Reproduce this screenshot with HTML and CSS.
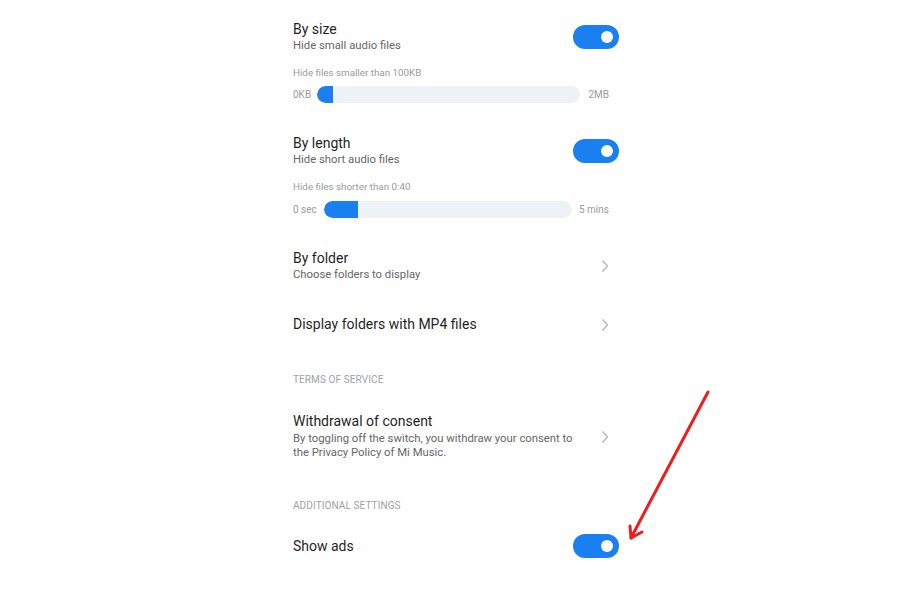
FILE: index.html
```html
<!DOCTYPE html>
<html>
<head>
<meta charset="utf-8">
<link rel="stylesheet" href="styles.css">
</head>
<body>
<div class="page">
  <div class="settings">
    <div class="row row-size">
      <div class="text">
        <div class="title">By size</div>
        <div class="sub">Hide small audio files</div>
      </div>
      <div class="toggle"><span class="knob"></span></div>
    </div>
    <div class="caption cap1">Hide files smaller than 100KB</div>
    <div class="slider-row s1">
      <span class="lbl">0KB</span>
      <div class="track"><div class="fill" style="width:16px"></div></div>
      <span class="lbl">2MB</span>
    </div>

    <div class="row row-len">
      <div class="text">
        <div class="title">By length</div>
        <div class="sub">Hide short audio files</div>
      </div>
      <div class="toggle"><span class="knob"></span></div>
    </div>
    <div class="caption cap2">Hide files shorter than 0:40</div>
    <div class="slider-row s2">
      <span class="lbl">0 sec</span>
      <div class="track"><div class="fill" style="width:34px"></div></div>
      <span class="lbl">5 mins</span>
    </div>

    <div class="row row-folder">
      <div class="text">
        <div class="title">By folder</div>
        <div class="sub">Choose folders to display</div>
      </div>
      <svg class="chev" width="8" height="14" viewBox="0 0 8 14"><path d="M1.5 1.5 L6.5 7 L1.5 12.5" fill="none" stroke="#b8b8b8" stroke-width="1.4"/></svg>
    </div>

    <div class="row row-mp4">
      <div class="text">
        <div class="title">Display folders with MP4 files</div>
      </div>
      <svg class="chev" width="8" height="14" viewBox="0 0 8 14"><path d="M1.5 1.5 L6.5 7 L1.5 12.5" fill="none" stroke="#b8b8b8" stroke-width="1.4"/></svg>
    </div>

    <div class="section sec1">TERMS OF SERVICE</div>

    <div class="row row-consent">
      <div class="text">
        <div class="title">Withdrawal of consent</div>
        <div class="sub desc">By toggling off the switch, you withdraw your consent to<br>the Privacy Policy of Mi Music.</div>
      </div>
      <svg class="chev" width="8" height="14" viewBox="0 0 8 14"><path d="M1.5 1.5 L6.5 7 L1.5 12.5" fill="none" stroke="#b8b8b8" stroke-width="1.4"/></svg>
    </div>

    <div class="section sec2">ADDITIONAL SETTINGS</div>

    <div class="row row-ads">
      <div class="text">
        <div class="title">Show ads</div>
      </div>
      <div class="toggle"><span class="knob"></span></div>
    </div>
  </div>

  <svg class="arrow" width="900" height="600" viewBox="0 0 900 600">
    <g stroke="#ee1c1c" stroke-width="3" stroke-linecap="round" fill="none">
      <line x1="708" y1="392" x2="632" y2="536"/>
      <line x1="631" y1="538" x2="630" y2="526"/>
      <line x1="631" y1="538" x2="642" y2="532"/>
    </g>
  </svg>
</div>
</body>
</html>
```
FILE: styles.css
```css
* { box-sizing: border-box; }
html, body { margin: 0; padding: 0; background: #ffffff; }
body {
  width: 900px;
  height: 600px;
  overflow: hidden;
  font-family: Roboto, "Noto Sans", "Liberation Sans", sans-serif;
  color: #222222;
}
.page { position: relative; width: 900px; height: 600px; }
.settings {
  display: flex;
  flex-direction: column;
  width: 326px;
  margin-left: 293px;
  padding-top: 21px;
}
.row {
  display: flex;
  align-items: center;
  justify-content: space-between;
}
.title {
  font-size: 14px;
  line-height: 17px;
  color: #1f1f1f;
}
.sub {
  font-size: 11.3px;
  line-height: 14px;
  color: #666666;
  margin-top: 1px;
}
.desc { line-height: 14px; margin-top: 2px; }
.caption {
  font-size: 9.8px;
  line-height: 12px;
  color: #9a9a9a;
}
.cap1, .cap2 { margin-top: 14px; }
.slider-row {
  display: flex;
  align-items: center;
  height: 17px;
  margin-right: 10px;
}
.s1 { margin-top: 7px; }
.s2 { margin-top: 8px; }
.lbl {
  font-size: 10px;
  color: #9a9a9a;
}
.track {
  flex: 1;
  height: 17px;
  background: #eef1f5;
  border-radius: 9px;
  overflow: hidden;
}
.s1 .track { margin: 0 8px 0 6px; }
.s2 .track { margin: 0 7px 0 7px; }
.fill {
  height: 100%;
  background: #1a7ff0;
  border-radius: 9px 0 0 9px;
}
.toggle {
  width: 46px;
  height: 24px;
  border-radius: 12px;
  background: #1a7ff0;
  display: flex;
  align-items: center;
  justify-content: flex-end;
  padding-right: 6px;
}
.knob {
  width: 12px;
  height: 12px;
  border-radius: 50%;
  background: #ffffff;
}
.chev { margin-right: 10px; }
.row-len { margin-top: 32px; }
.row-folder { margin-top: 32px; }
.row-mp4 { margin-top: 34px; }
.section {
  font-size: 10px;
  line-height: 12px;
  color: #a0a0a8;
  letter-spacing: 0.1px;
}
.sec1 { margin-top: 41px; }
.row-consent { margin-top: 27px; }
.sec2 { margin-top: 40px; }
.row-ads { margin-top: 22px; }
.arrow { position: absolute; left: 0; top: 0; pointer-events: none; }
```
